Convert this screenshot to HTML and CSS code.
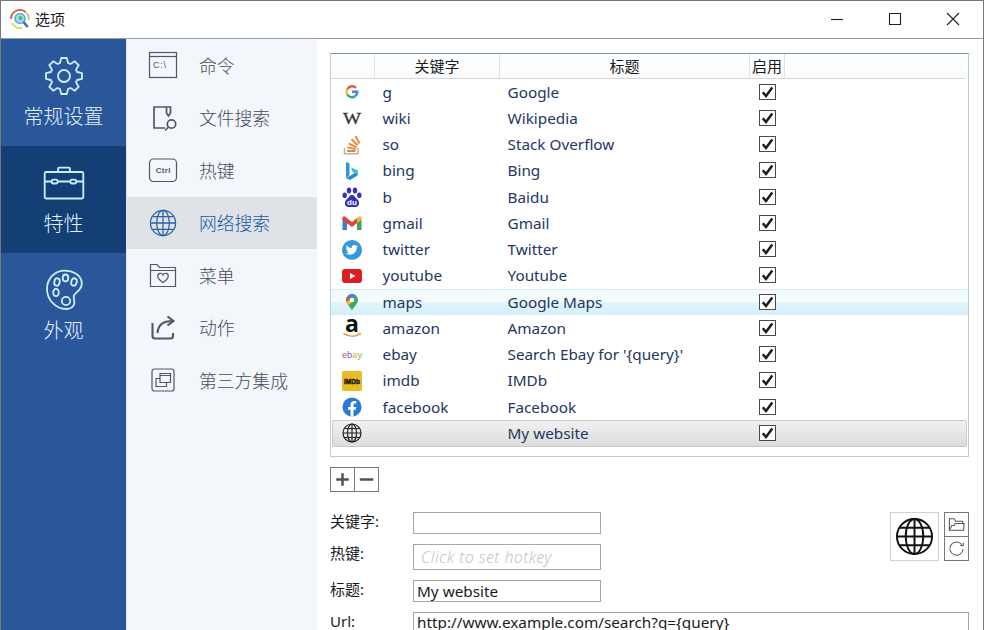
FILE: index.html
```html
<!DOCTYPE html>
<html lang="zh-CN">
<head>
    <meta charset="UTF-8">
    <meta name="viewport" content="width=device-width, initial-scale=1.0">
    <title>选项</title>
    <link rel="stylesheet" href="styles.css">
</head>
<body>
    <!-- shared icons -->
    <svg class="defs" width="0" height="0">
        <symbol id="globe" viewBox="0 0 40 40">
            <g fill="none" stroke="currentColor">
                <circle cx="20" cy="20" r="18"/>
                <ellipse cx="20" cy="20" rx="9" ry="18"/>
                <path d="M20 2v36M2 20h36M5 11h30M5 29h30"/>
            </g>
        </symbol>
        <symbol id="check" viewBox="0 0 15 14">
            <path d="M2.800 7.200 6 11 12.300 2.500" fill="none" stroke="#1c1c1c" stroke-width="2.500"/>
        </symbol>
    </svg>

    <div class="window">
        <div class="titlebar">
            <svg class="logo" viewBox="0 0 22 22" fill="none">
                <path d="M2 11A9 9 0 0 1 17 4.300" stroke="#d9534c" stroke-width="1.800"/>
                <path d="M17.500 4.800A9 9 0 0 1 19.800 12" stroke="#a8cf7a" stroke-width="1.600"/>
                <path d="M3 15.200A9 9 0 0 0 13 19.800" stroke="#f0cb52" stroke-width="1.800"/>
                <circle cx="11" cy="10.500" r="5" fill="#a6dce2" stroke="#5aaed0" stroke-width="1.600"/>
                <circle cx="11.500" cy="10" r="2" fill="#55b27c"/>
                <path d="m14.500 14 4.200 5" stroke="#3276b8" stroke-width="2.600"/>
            </svg>
            <span class="title">选项</span>
            <div class="controls">
                <svg viewBox="0 0 14 14"><path d="M1 7.500h12"/></svg>
                <svg viewBox="0 0 14 14"><path d="M1.500 1.500h11v11h-11z"/></svg>
                <svg viewBox="0 0 14 14"><path d="m1 1 12 12M13 1 1 13"/></svg>
            </div>
        </div>

        <div class="main">
            <div class="sidebar">
                <div class="tab">
                    <svg viewBox="-21 -21 42 42"><path d="M-4-13-2.800-18H2.800L4-13 6.360-12.020 10.750-14.710 14.710-10.750 12.020-6.360 13-4 18-2.800V2.800L13 4 12.020 6.360 14.710 10.750 10.750 14.710 6.360 12.020 4 13 2.800 18H-2.800L-4 13-6.360 12.020-10.750 14.710-14.710 10.750-12.020 6.360-13 4-18 2.800V-2.800L-13-4-12.020-6.360-14.710-10.750-10.750-14.710-6.360-12.020Z"/><circle r="6"/></svg>
                    <span>常规设置</span>
                </div>
                <div class="tab active">
                    <svg viewBox="-21 -21 42 42"><rect x="-19.300" y="-11" width="38.600" height="26.500" rx="1.500"/><path d="M-6-11v-3q0-1.300 1.300-1.300h9.400q1.300 0 1.300 1.300v3M-19.300-1.500h7M-6.300-1.500h12.600M12.300-1.500h7"/><rect x="-12.300" y="-3.300" width="6" height="3.800" rx="1.700"/><rect x="6.300" y="-3.300" width="6" height="3.800" rx="1.700"/></svg>
                    <span>特性</span>
                </div>
                <div class="tab">
                    <svg viewBox="-21 -21 42 42"><path d="M1-19.300C-10-19.300-17-11-17-1-17 10-8 19 2 19 8 19 11.500 15.500 10 9.500 9 5 10.500 4 13.500 1.500 17-1.500 18.500-5 17.500-9 16-15.500 9-19.300 1-19.300Z"/><ellipse cx="-7" cy="-8" rx="2.700" ry="3.800" transform="rotate(12 -7 -8)"/><ellipse cx="1.500" cy="-12" rx="2.800" ry="3.500"/><ellipse cx="10" cy="-8" rx="2.700" ry="3.800" transform="rotate(15 10 -8)"/><ellipse cx="-8" cy="2.500" rx="2.800" ry="3.700"/><ellipse cx="2" cy="11" rx="4.200" ry="4.200"/></svg>
                    <span>外观</span>
                </div>
            </div>

            <div class="submenu">
                <div class="item">
                    <svg viewBox="0 0 30 30"><rect x="1.500" y="2.500" width="27" height="25"/><path d="M1.500 6.500h27"/><text x="5" y="18" font-size="9" textLength="13">C:\</text></svg>
                    <span>命令</span>
                </div>
                <div class="item">
                    <svg viewBox="0 0 30 30" class="bold"><path d="M18.500 4H6v21h11M18.500 4v6l2 3 2-3V4z"/><circle cx="23.500" cy="21" r="4.200"/><path d="m20.500 24-3.500 3.500"/></svg>
                    <span>文件搜索</span>
                </div>
                <div class="item">
                    <svg viewBox="0 0 30 30"><rect x="1.500" y="4" width="27" height="22.500" rx="4"/><text x="15.300" y="18" font-size="8" font-weight="bold" text-anchor="middle" letter-spacing=".3">Ctrl</text></svg>
                    <span>热键</span>
                </div>
                <div class="item active">
                    <svg viewBox="0 0 40 40" class="globe"><use href="#globe" width="40" height="40"/></svg>
                    <span>网络搜索</span>
                </div>
                <div class="item">
                    <svg viewBox="0 0 30 30"><path d="M2.500 26.500V4.500h6.500l2.500 3h16v19zM2.500 10.500h25M15 22.500c-3-2-5.300-4.200-5.300-6.500 0-3.200 4-3.700 5.300-1 1.300-2.700 5.300-2.200 5.300 1 0 2.300-2.300 4.500-5.300 6.500z"/></svg>
                    <span>菜单</span>
                </div>
                <div class="item">
                    <svg viewBox="0 0 30 30" class="share"><path d="M4.500 10v13q0 2.500 2.500 2.500h15.500q2.500 0 2.500-2.500v-3M9.500 20C10 12 14.500 8 24.500 8M19.500 3.500l6 4.500-6 4.500"/></svg>
                    <span>动作</span>
                </div>
                <div class="item">
                    <svg viewBox="0 0 30 30"><rect x="4" y="4" width="22" height="22" rx="2.500"/><path d="M12 8.500h10.500v9H12zM12 10.500h10.500M12 13.500H8v8h10.500v-4"/></svg>
                    <span>第三方集成</span>
                </div>
            </div>

            <div class="content">
                <div class="table">
                    <div class="row head"><span></span><span>关键字</span><span>标题</span><span>启用</span></div>
                    <div class="row">
                        <svg viewBox="0 0 20 20" fill="none" stroke-width="2.400"><path d="M14 6A5.300 5.300 0 0 0 5.300 7.200" stroke="#e0584b"/><path d="M5.300 7.200a5.500 5.500 0 0 0 0 5.300" stroke="#efba3d"/><path d="M5.300 12.500a5.300 5.300 0 0 0 7.800 1.700" stroke="#4aa565"/><path d="M10 9.800h5.300c0 1.800-.8 3.400-2.200 4.400" stroke="#4b80de"/></svg>
                        <span>g</span><span>Google</span><i class="box"><svg><use href="#check"/></svg></i>
                    </div>
                    <div class="row">
                        <svg viewBox="0 0 20 20"><text x="1" y="15.500" font-family="Liberation Serif" font-size="17" textLength="18" lengthAdjust="spacingAndGlyphs" fill="#333" stroke="#333" stroke-width=".3">W</text></svg>
                        <span>wiki</span><span>Wikipedia</span><i class="box"><svg><use href="#check"/></svg></i>
                    </div>
                    <div class="row">
                        <svg viewBox="0 0 20 20" fill="none"><path d="M2.500 13v5.800h13.500V13" stroke="#b5b2ae" stroke-width="1.500"/><path d="M5 16h8.500M5.300 12.400l8.500 1.700M6.600 8.300l8 4M9.500 4.300l6.300 6M13.500 1l4 7.500" stroke="#e8863a" stroke-width="1.900"/></svg>
                        <span>so</span><span>Stack Overflow</span><i class="box"><svg><use href="#check"/></svg></i>
                    </div>
                    <div class="row">
                        <svg viewBox="0 0 20 20"><path d="M4 1l3.500 1.300v12L4 17z" fill="#3195dc"/><path d="M4 17l11.500-6.500v4L8 19z" fill="#238bc9"/><path d="M9 6.500l7 3v4.200L10.500 11z" fill="#42bdd4"/></svg>
                        <span>bing</span><span>Bing</span><i class="box"><svg><use href="#check"/></svg></i>
                    </div>
                    <div class="row">
                        <svg viewBox="0 0 20 20" fill="#3530bd"><ellipse cx="2.700" cy="8.300" rx="2.200" ry="2.800"/><ellipse cx="7" cy="3.500" rx="2.200" ry="2.900"/><ellipse cx="13" cy="3.500" rx="2.200" ry="2.900"/><ellipse cx="17.300" cy="8.300" rx="2.200" ry="2.800"/><path d="M10 8c2.500 0 3 2.500 5 4 3 2.300 3 8-1.500 8h-7C2 20 2 14.300 5 12c2-1.500 2.500-4 5-4z"/><text x="10" y="18" font-family="Liberation Sans" font-size="8" font-weight="bold" text-anchor="middle" fill="#fff">du</text></svg>
                        <span>b</span><span>Baidu</span><i class="box"><svg><use href="#check"/></svg></i>
                    </div>
                    <div class="row">
                        <svg viewBox="0 0 20 20"><path d="M.5 5l4.500 3v9H.5z" fill="#4478d2"/><path d="M15 8l4.500-3v12H15z" fill="#3da35b"/><path d="M15 5l2-1.600q2.500-.6 2.500 1.600v2L15 10z" fill="#efb83a"/><path d="M.5 7V5q0-2.200 2.500-1.600L10 9l5-4v5l-5 4z" fill="#dc483d"/></svg>
                        <span>gmail</span><span>Gmail</span><i class="box"><svg><use href="#check"/></svg></i>
                    </div>
                    <div class="row">
                        <svg viewBox="0 0 20 20"><circle cx="10" cy="10" r="10" fill="#3598dc"/><path d="M16 6.300l-1.400.4c.5-.4.9-.9 1.100-1.400l-1.600.6C11.900 3.900 9.300 5.500 9.900 8 7.700 7.900 5.800 6.800 4.500 5.200c-.7 1.300-.3 2.600.7 3.400l-1.100-.3c0 1.300.8 2.300 2 2.600H5c.4 1 1.300 1.500 2.300 1.600-1 .8-2.300 1.200-3.600 1 5.400 3.200 11.100-.2 11-5.900z" fill="#fff"/></svg>
                        <span>twitter</span><span>Twitter</span><i class="box"><svg><use href="#check"/></svg></i>
                    </div>
                    <div class="row">
                        <svg viewBox="0 0 20 20"><rect y="3" width="20" height="14" rx="3" fill="#dd1d20"/><path d="M8 7l5.500 3L8 13z" fill="#fff"/></svg>
                        <span>youtube</span><span>Youtube</span><i class="box"><svg><use href="#check"/></svg></i>
                    </div>
                    <div class="row hover">
                        <svg viewBox="0 0 20 20"><path d="M10 19c-.8-4-6-6.500-6-11a6 6 0 0 1 12 0c0 4.500-5.200 7-6 11z" fill="#43a75c"/><path d="M5.200 4.400L10 8l4-4.500A6 6 0 0 0 5.200 4.400z" fill="#4a83da"/><path d="M5.200 4.400A6 6 0 0 0 4.500 10L9 7z" fill="#db5547"/><path d="M4.500 10q.5 1.700 2 3.300L12 8 9 7z" fill="#efbd40"/><circle cx="10" cy="8" r="2.200" fill="#fff"/></svg>
                        <span>maps</span><span>Google Maps</span><i class="box"><svg><use href="#check"/></svg></i>
                    </div>
                    <div class="row">
                        <svg viewBox="0 0 20 20"><text x="10" y="13.500" font-family="Open Sans" font-size="23" font-weight="bold" text-anchor="middle" fill="#111">a</text><path d="M1.500 15.500q8.500 5.300 16 .7" fill="none" stroke="#e9a04b" stroke-width="1.500"/><path d="M15.500 15.300l3-.3-.6 2.600" fill="none" stroke="#e9a04b"/></svg>
                        <span>amazon</span><span>Amazon</span><i class="box"><svg><use href="#check"/></svg></i>
                    </div>
                    <div class="row">
                        <svg viewBox="0 0 20 20"><text x="0" y="12.500" font-family="Liberation Sans" font-size="9" textLength="20" lengthAdjust="spacingAndGlyphs"><tspan fill="#d35050">e</tspan><tspan fill="#5a64c0">b</tspan><tspan fill="#d9a842">a</tspan><tspan fill="#90b342">y</tspan></text></svg>
                        <span>ebay</span><span>Search Ebay for '{query}'</span><i class="box"><svg><use href="#check"/></svg></i>
                    </div>
                    <div class="row">
                        <svg viewBox="0 0 20 20"><rect width="20" height="20" rx="1.500" fill="#eabb27"/><text x="2" y="13" font-family="Liberation Sans" font-size="8" font-weight="bold" textLength="16" lengthAdjust="spacingAndGlyphs" fill="#1d1808" stroke="#1d1808" stroke-width=".5">IMDb</text></svg>
                        <span>imdb</span><span>IMDb</span><i class="box"><svg><use href="#check"/></svg></i>
                    </div>
                    <div class="row">
                        <svg viewBox="0 0 20 20"><circle cx="10" cy="10" r="9.500" fill="#2a78dc"/><path d="M8.500 19.500v-6.700H6v-2.900h2.500V7.800c0-2.600 1.500-3.900 3.800-3.900l2 .2v2.400h-1.200c-1.200 0-1.600.7-1.600 1.500v1.900h2.700l-.5 2.900h-2.200v6.700z" fill="#fff"/></svg>
                        <span>facebook</span><span>Facebook</span><i class="box"><svg><use href="#check"/></svg></i>
                    </div>
                    <div class="row selected">
                        <svg viewBox="0 0 40 40" stroke-width="2.400"><use href="#globe" width="40" height="40"/></svg>
                        <span></span><span>My website</span><i class="box"><svg><use href="#check"/></svg></i>
                    </div>
                </div>

                <div class="buttons">
                    <button><svg viewBox="0 0 24 24"><path d="M12 5.500v13M5.500 12h13"/></svg></button>
                    <button><svg viewBox="0 0 24 24"><path d="M5 12h14"/></svg></button>
                </div>

                <div class="form">
                    <div class="fields">
                        <label>关键字:</label><div class="input"></div>
                        <label>热键:</label><div class="input hotkey">Click to set hotkey</div>
                        <label>标题:</label><div class="input">My website</div>
                        <label>Url:</label><div class="input url">http://www.example.com/search?q={query}</div>
                    </div>
                    <div class="picker">
                        <div class="preview"><svg viewBox="0 0 40 40" stroke-width="2"><use href="#globe" width="40" height="40"/></svg></div>
                        <div class="actions">
                            <div><svg viewBox="0 0 18 18"><path d="M1.500 15V3h5l1.500 2.500h7.500V8M1.500 15L4 10h2.500l1-2h9.500l-.5 7z"/></svg></div>
                            <div><svg viewBox="0 0 18 18"><path d="M14.600 4.800A7 7 0 1 0 16 9.500M16.300 3l-.3 3-3-.3"/></svg></div>
                        </div>
                    </div>
                </div>
            </div>
        </div>
    </div>
</body>
</html>
```
FILE: styles.css
```css
* {
    margin: 0;
    padding: 0;
    box-sizing: border-box;
}

body {
    font-family: 'Noto Sans', 'Noto Sans CJK SC', sans-serif;
    font-size: 15.3px;
    color: #1a1a1a;
    background: #fff;
    overflow: hidden;
}

.defs {
    display: block;
}

.window {
    height: 630px;
    border: 1px solid #777;
    border-bottom: 0;
    overflow: hidden;
}

.titlebar {
    height: 38px;
    border-bottom: 1px solid #9a9a9a;
    display: flex;
    align-items: center;
    padding: 0 23px 2px 8px;
}

.logo {
    width: 22px;
    height: 22px;
    margin-right: 4px;
}

.title {
    font-family: 'Noto Sans CJK SC', sans-serif;
    font-size: 15px;
}

.controls {
    display: flex;
    gap: 44px;
    margin-left: auto;
}

.controls svg {
    width: 14px;
    height: 14px;
    fill: none;
    stroke: #222;
    stroke-width: 1.1;
}

.main {
    display: flex;
    height: 591px;
}

/* left tabs */
.sidebar {
    width: 125px;
    background: #2a579a;
    color: #e4f3ff;
}

.tab {
    height: 107.5px;
    padding-top: 16px;
    display: flex;
    flex-direction: column;
    align-items: center;
    font: 300 20px/38px 'Noto Sans CJK SC', sans-serif;
}

.tab:first-child {
    height: 106.5px;
}

.tab.active {
    background: #133f75;
}

.tab svg {
    width: 42px;
    height: 42px;
    fill: none;
    stroke: #cceeff;
    stroke-width: 1.8;
    stroke-linejoin: round;
}

/* second level menu */
.submenu {
    width: 191px;
    background: #f3f6fa;
    border-left: 1px solid #dfe6f0;
}

.item {
    height: 52.5px;
    display: flex;
    align-items: center;
    gap: 21px;
    padding-left: 21px;
    color: #454d60;
    font: 300 17.8px/26px 'Noto Sans CJK SC', sans-serif;
}

.item span {
    padding-bottom: 1px;
}

.item svg {
    width: 30px;
    height: 30px;
    fill: none;
    stroke: #505868;
    stroke-width: 1.2;
}

.item svg text {
    font-family: 'Liberation Sans', sans-serif;
    fill: #505868;
    stroke: none;
}

.item svg.bold {
    stroke-width: 1.7;
}

.item svg.share {
    stroke-width: 2.1;
}

.item svg.globe {
    width: 28px;
    height: 28px;
    margin: 0 1px;
    stroke: none;
    stroke-width: 1.8;
    color: #2a62a8;
}

.item.active {
    background: #dfe2e6;
    color: #1858a8;
}

.content {
    flex: 1;
    padding: 14px 14px 0 13px;
}

/* search engine list */
.table {
    height: 404px;
    border: 1px solid #b9d1da;
    border-top-color: #7396b5;
}

.row {
    display: grid;
    grid-template-columns: 44px 125px 250px 35px;
    align-items: center;
    height: 26.25px;
    color: #24365f;
    border: 1px solid transparent;
    border-width: 1px 0;
}

.row > svg {
    width: 20px;
    height: 20px;
    margin-left: 11px;
    color: #222;
    overflow: visible;
}

.row > span {
    padding: 0 0 1px 7.5px;
    line-height: 22px;
    white-space: nowrap;
}

.row.head {
    height: 25px;
    margin-right: 3px;
    border: 0;
    border-bottom: 1px solid #d3d7dc;
    color: #1a1a1a;
    font-size: 15px;
    background: linear-gradient(#fff, #fafbfc);
}

.row.head span {
    height: 24px;
    padding: 0;
    line-height: 25px;
    text-align: center;
    border-right: 1px solid #dfe2e6;
}

.row.hover {
    border-color: #d3edf4;
    background: linear-gradient(#f4fbfd 48%, #e2f4fb 52%, #d6f0fa);
}

.row.selected {
    border-color: #c8cacb;
    border-radius: 2px;
    box-shadow: inset 1px 0 #c8cacb, inset -1px 0 #c8cacb;
    margin: 0 1px;
    grid-template-columns: 43px 125px 250px 35px;
    background: linear-gradient(#f1f1f1, #dcdcdc);
}

.row.selected > svg {
    margin-left: 10px;
}

.box {
    width: 17px;
    height: 16px;
    border: 1px solid #4a4a4a;
    background: #fff;
    margin-left: 9px;
    margin-bottom: 1px;
    display: flex;
}

.box svg {
    width: 15px;
    height: 14px;
}

.buttons {
    display: flex;
    margin-top: 10px;
}

.buttons button {
    width: 25px;
    height: 25px;
    border: 1px solid #777;
    background: #fff;
}

.buttons button + button {
    margin-left: -1px;
}

.buttons svg {
    display: block;
    width: 23px;
    height: 23px;
    stroke: #505050;
    stroke-width: 2.6;
}

/* edit form */
.form {
    display: flex;
    justify-content: space-between;
    margin-top: 20px;
}

.fields {
    display: grid;
    grid-template-columns: 83px 188px;
    grid-template-rows: 22px 26px 22px 24px;
    row-gap: 10px;
}

.fields label {
    font-size: 15px;
    line-height: 19px;
}

.input {
    height: 100%;
    border: 1px solid #a6a6a6;
    padding-left: 3px;
    line-height: 20px;
    white-space: nowrap;
}

.input.hotkey {
    padding-left: 7px;
    line-height: 25px;
    color: #c4c4c4;
    font-size: 16px;
    font-style: italic;
    font-weight: 300;
    letter-spacing: .4px;
}

.input.url {
    width: 556px;
    line-height: 19px;
}

.picker {
    display: flex;
    gap: 5px;
}

.preview {
    width: 49px;
    height: 49px;
    border: 1px solid #d0d0d0;
    padding: 4px;
    color: #111;
}

.preview svg {
    display: block;
    width: 39px;
    height: 39px;
}

.actions div {
    width: 25px;
    height: 25px;
    border: 1px solid #777;
    padding: 3px;
}

.actions div + div {
    margin-top: -1px;
}

.actions svg {
    display: block;
    width: 17px;
    height: 17px;
    fill: none;
    stroke: #555;
    stroke-width: 1.1;
}
```
